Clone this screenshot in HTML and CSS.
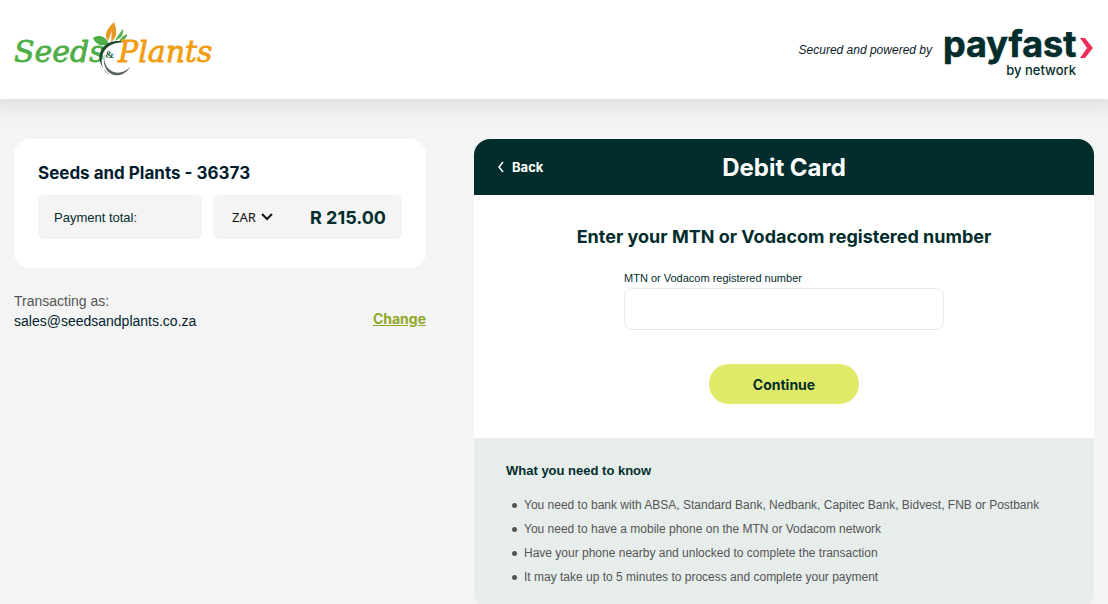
FILE: index.html
```html
<!DOCTYPE html>
<html lang="en">
<head>
<meta charset="utf-8">
<meta name="viewport" content="width=device-width, initial-scale=1">
<title>Payfast - Debit Card</title>
<link rel="stylesheet" href="styles.css">
</head>
<body>
<header class="topbar">
  <svg class="merchant-logo" width="202" height="60" viewBox="0 0 202 60" role="img" aria-label="Seeds &amp; Plants">
    <text class="logo-word logo-green" x="0" y="42">Seeds</text>
    <path d="M79 18C84 14 92 16 95 24C88 27 82 25 79 18Z" fill="#4fae46"/>
    <path d="M94 21C89 14 94 8 100 2C103 10 104 17 97 22L98 11Z" fill="#e99a26"/>
    <path d="M101 21C103 16 106 13 109 9C110 15 107 18 101 21ZM105 22C107 17 110 15 113 14C113 18 111 20 105 22Z" fill="#5db052"/>
    <path d="M114 23C90 14 74 38 96 55C83 48 85 26 103 23C107 22 111 22 114 23Z" fill="#1e4a2c"/>
    <path d="M91 31C86 51 105 59 116 47C107 63 84 55 91 31Z" fill="#59645b"/>
    <text class="logo-amp" x="91" y="38">&amp;</text>
    <text class="logo-word logo-orange" x="104" y="42">Plants</text>
  </svg>
  <div class="powered">
    <span class="powered-text">Secured and powered by</span>
    <svg class="payfast-logo" width="152" height="52" viewBox="0 0 152 52" role="img" aria-label="payfast by network">
      <text class="pf-name" x="1" y="33">payfast</text>
      <path d="M138 14H143L151 24L143 34H138L145 24Z" fill="#ee2f5b"/>
      <text class="pf-sub" x="134" y="51" text-anchor="end">by network</text>
    </svg>
  </div>
</header>
<main class="layout">
  <aside>
    <section class="order-card">
      <h1 class="order-title">Seeds and Plants - 36373</h1>
      <div class="totals">
        <div class="total-label">Payment total:</div>
        <div class="total-value">
          <div class="currency">
            <select class="currency-select" aria-label="Currency"><option>ZAR</option></select>
            <svg class="currency-arrow" width="12" height="8" viewBox="0 0 12 8" aria-hidden="true"><path d="M1 1L6 6L11 1" fill="none" stroke="#111" stroke-width="2"/></svg>
          </div>
          <strong class="amount">R 215.00</strong>
        </div>
      </div>
    </section>
    <div class="account">
      <div>
        <div class="account-label">Transacting as:</div>
        <div class="account-email">sales@seedsandplants.co.za</div>
      </div>
      <a class="change" href="#">Change</a>
    </div>
  </aside>
  <section class="pay-card">
    <div class="pay-head">
      <button class="back" type="button">
        <svg width="6" height="12" viewBox="0 0 6 12" aria-hidden="true"><path d="M5 1L1 6L5 11" fill="none" stroke="#fff" stroke-width="1.5"/></svg>
        Back
      </button>
      <h2 class="pay-title">Debit Card</h2>
    </div>
    <form class="pay-form">
      <h3 class="form-title">Enter your MTN or Vodacom registered number</h3>
      <div class="field">
        <label class="field-label" for="number">MTN or Vodacom registered number</label>
        <input class="field-input" id="number" type="tel">
      </div>
      <button class="continue" type="button">Continue</button>
    </form>
    <div class="info">
      <h4 class="info-title">What you need to know</h4>
      <ul class="info-list">
        <li>You need to bank with ABSA, Standard Bank, Nedbank, Capitec Bank, Bidvest, FNB or Postbank</li>
        <li>You need to have a mobile phone on the MTN or Vodacom network</li>
        <li>Have your phone nearby and unlocked to complete the transaction</li>
        <li>It may take up to 5 minutes to process and complete your payment</li>
      </ul>
    </div>
  </section>
</main>
</body>
</html>
```
FILE: styles.css
```css
* { box-sizing: border-box; }
body {
  margin: 0;
  background: #f4f4f4;
  color: #022d2c;
  font-family: "Liberation Sans", Arial, sans-serif;
  font-size: 13px;
}
h1, h2, h3, h4, ul { margin: 0; padding: 0; }
button, input, select { font: inherit; color: inherit; }
h1, h2, h3, .back, .continue, .change, .amount { font-family: Inter, sans-serif; }

.topbar {
  display: flex;
  align-items: center;
  justify-content: space-between;
  padding: 20px 14px 19px;
  background: #fff;
  box-shadow: 0 -20px 28px 20px rgba(0, 0, 0, 0.14);
}
.merchant-logo { overflow: visible; }
.logo-word { font: italic 30px "DejaVu Serif", serif; stroke-width: 0.8px; }
.logo-green { fill: #4fae46; stroke: #4fae46; }
.logo-orange { fill: #f39c12; stroke: #f39c12; }
.logo-amp { font: bold 11px "Liberation Serif", serif; fill: #1e6a4c; }
.powered { display: flex; align-items: center; gap: 10px; }
.powered-text { font-size: 12px; font-style: italic; color: #0b1b2b; }
.payfast-logo { overflow: visible; }
.pf-name {
  font: 700 36px Inter, sans-serif;
  fill: #022d2c;
  stroke: #022d2c;
  stroke-width: 0.6px;
}
.pf-sub { font: 500 13px Inter, sans-serif; fill: #022d2c; }

.layout {
  display: grid;
  grid-template-columns: 412fr 620fr;
  gap: 48px;
  padding: 40px 14px 0;
}
.order-card {
  padding: 24px 24px 29px;
  border-radius: 16px;
  background: #fff;
}
.order-title { font-size: 17px; line-height: 20px; color: #021d2e; }
.totals {
  display: grid;
  grid-template-columns: 164fr 189fr;
  gap: 11px;
  margin-top: 12px;
}
.total-label, .total-value {
  display: flex;
  align-items: center;
  height: 44px;
  padding: 0 16px;
  border-radius: 6px;
  background: #f4f4f4;
}
.total-value { justify-content: space-between; }
.currency { display: flex; align-items: center; gap: 5px; padding-left: 3px; }
.currency-select {
  appearance: none;
  padding: 0;
  border: 0;
  background: none;
  font: 13px "Noto Sans", sans-serif;
  color: #111;
}
.amount { font-size: 18px; }
.account {
  display: flex;
  align-items: flex-end;
  justify-content: space-between;
  margin-top: 23px;
  font-size: 14px;
  line-height: 20px;
}
.account-label { color: #555; }
.account-email { color: #021d2e; }
.change { padding-bottom: 2px; font-weight: 700; color: #8fa827; }

.pay-card { border-radius: 16px; overflow: hidden; background: #fff; }
.pay-head {
  display: grid;
  grid-template-columns: 1fr auto 1fr;
  align-items: center;
  height: 56px;
  padding: 0 24px;
  background: #022d2c;
  color: #fff;
}
.back {
  display: flex;
  align-items: center;
  justify-self: start;
  gap: 8px;
  padding: 0;
  border: 0;
  background: none;
  font-weight: 700;
}
.pay-title { font-size: 24px; }
.pay-form {
  display: flex;
  flex-direction: column;
  align-items: center;
  padding: 30px 32px 34px;
}
.form-title { font-size: 18px; line-height: 24px; }
.field { width: 320px; max-width: 100%; margin-top: 21px; }
.field-label { display: block; font-size: 11px; line-height: 16px; }
.field-input {
  display: block;
  width: 100%;
  height: 42px;
  margin-top: 2px;
  padding: 0 12px;
  border: 1px solid #e6eceb;
  border-radius: 8px;
  background: #fff;
}
.continue {
  width: 150px;
  height: 40px;
  margin-top: 34px;
  border: 0;
  border-radius: 20px;
  background: #dfea68;
  font-size: 14px;
  font-weight: 700;
}
.info { padding: 24px 32px 20px; background: #e6edeb; }
.info-title { font-size: 13px; line-height: 18px; }
.info-list {
  margin-top: 13px;
  padding-left: 6px;
  list-style: none;
  line-height: 24px;
  font-size: 12px;
  color: #555;
}
.info-list li { display: flex; gap: 7px; }
.info-list li::before {
  content: "";
  flex: none;
  width: 5px;
  height: 5px;
  margin-top: 10px;
  border-radius: 50%;
  background: #555;
}
```
